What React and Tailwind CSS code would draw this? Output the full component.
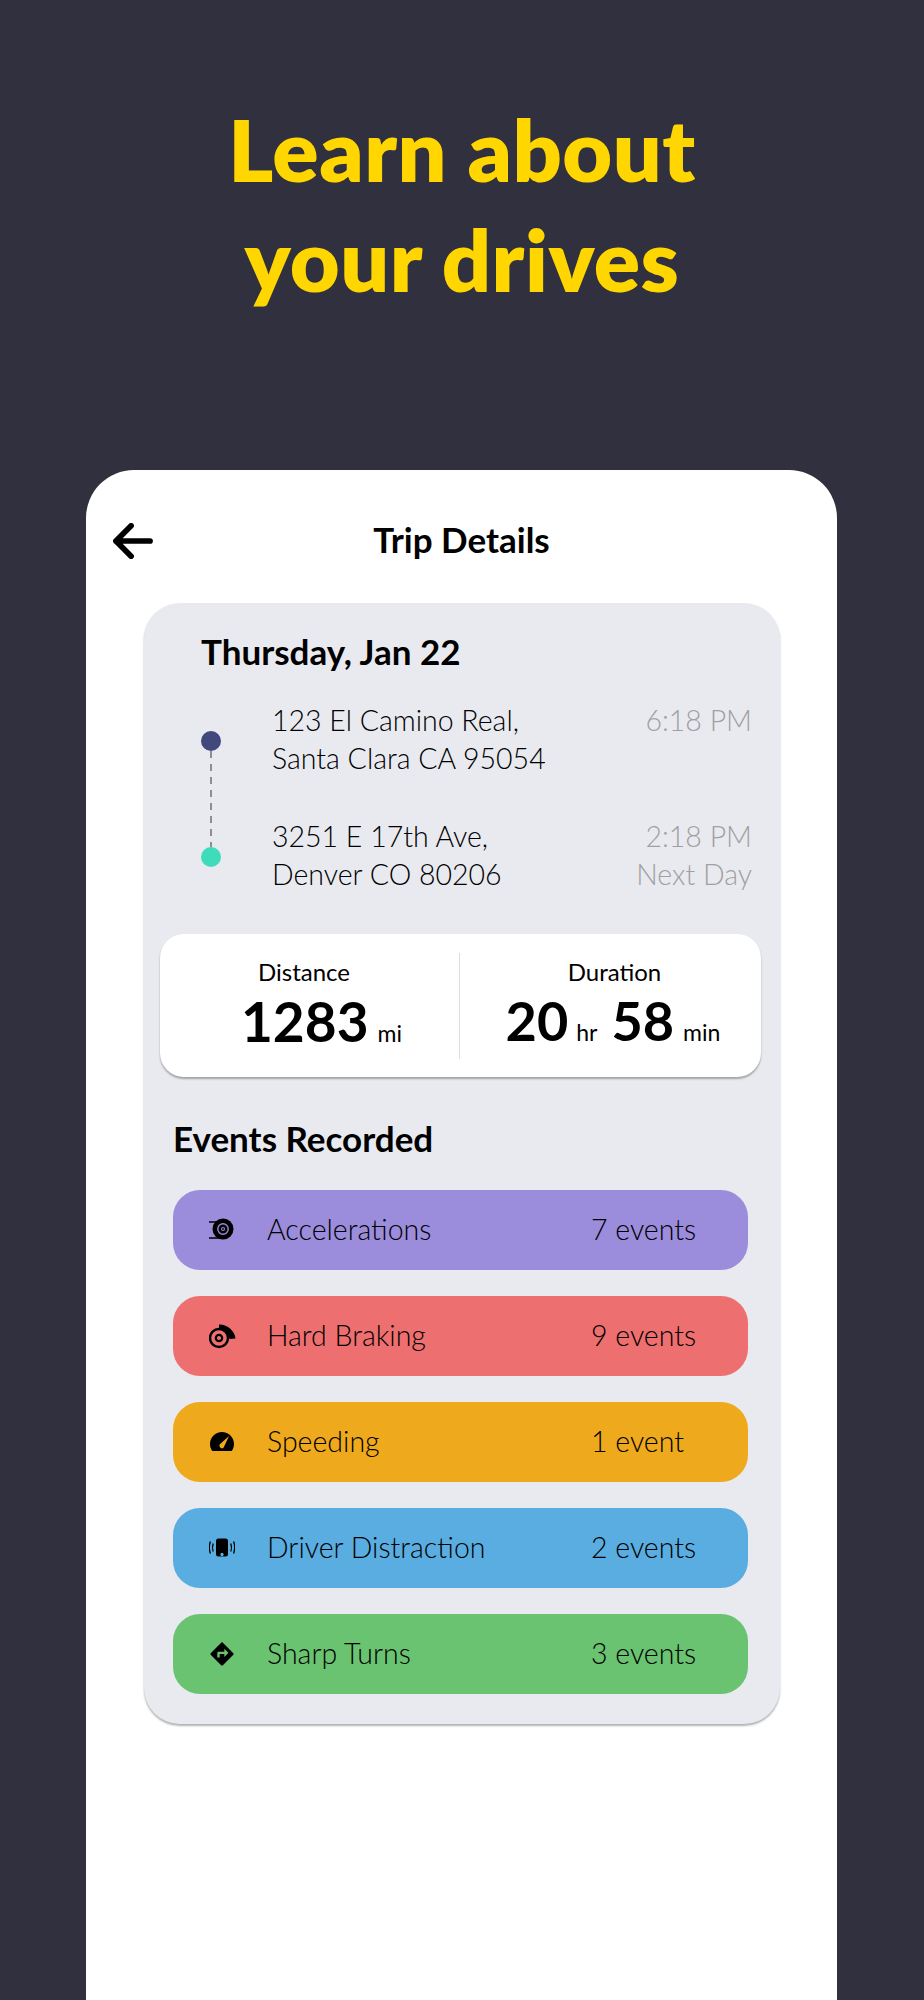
const font = "font-['Lato','Open_Sans',sans-serif]"

function AccelIcon() {
  return (
    <svg viewBox="0 0 26 26" className="w-[26px] h-[26px]">
      <path d="M0 5h9M-1 21h11" stroke="#000" strokeWidth="1.6" fill="none" />
      <circle cx="14" cy="12" r="10.500" fill="#000" />
      <circle cx="14" cy="12" r="5.200" fill="none" stroke="#9b8cdc" strokeWidth="1.400" />
      <circle cx="14" cy="12" r="2" fill="#9b8cdc" />
      <circle cx="14" cy="12" r="0.900" fill="#000" />
    </svg>
  )
}

function BrakeIcon() {
  return (
    <svg viewBox="0 0 27 26" className="w-[27px] h-[26px]">
      <circle cx="10" cy="15" r="9" fill="none" stroke="#000" strokeWidth="2.400" />
      <circle cx="10" cy="15" r="3.200" fill="none" stroke="#000" strokeWidth="2.200" />
      <path d="M10 1.500C18 1 26 8 26.500 15.500L20.500 16C20 11 16 7 10 6Z" fill="#000" />
    </svg>
  )
}

function GaugeIcon() {
  return (
    <svg viewBox="0 0 26 26" className="w-[26px] h-[26px]">
      <path
        fillRule="evenodd"
        d="M13 3C6.400 3 1 8.400 1 15c0 2.400.7 4.600 1.900 6.400.4.400.8.600 1.300.600h17.600c.5 0 .9-.2 1.300-.6C24.300 19.600 25 17.400 25 15 25 8.400 19.600 3 13 3zM10.600 15.600L20 7l-5.200 11.200c-.6 1.100-1.900 1.500-3 .9-1.200-.7-1.600-2.400-1.200-3.500z"
        fill="#000"
      />
    </svg>
  )
}

function PhoneIcon() {
  return (
    <svg viewBox="0 0 26 26" className="w-[26px] h-[26px]">
      <path
        fillRule="evenodd"
        d="M9.500 3.500h7A2.500 2.500 0 0 1 19 6v13a2.500 2.500 0 0 1-2.500 2.500h-7A2.500 2.500 0 0 1 7 19V6a2.500 2.500 0 0 1 2.500-2.500zM13 17.800a1.700 1.700 0 1 0 0 3.400 1.700 1.700 0 0 0 0-3.400z"
        fill="#000"
      />
      <path d="M4.200 8.500c-1 2.600-1 5.400 0 8M21.800 8.500c1 2.600 1 5.400 0 8" stroke="#000" strokeWidth="1.300" fill="none" />
      <path d="M1.400 6.500c-1.400 3.900-1.400 8.100 0 12M24.600 6.500c1.400 3.900 1.400 8.100 0 12" stroke="#000" strokeWidth="1.300" fill="none" />
    </svg>
  )
}

function TurnIcon() {
  return (
    <svg viewBox="0 0 24 24" className="w-[28px] h-[28px]">
      <path
        d="M21.710 11.290l-9-9c-.39-.39-1.020-.39-1.410 0l-9 9c-.39.39-.39 1.020 0 1.410l9 9c.39.39 1.020.39 1.410 0l9-9c.39-.38.39-1.010 0-1.410zM14 14.500V12h-4v3H8v-4c0-.55.45-1 1-1h5V7.500l3.500 3.500-3.500 3.500z"
        fill="#000"
      />
    </svg>
  )
}

const events = [
  { label: 'Accelerations', count: '7 events', color: 'bg-[#9b8cdc]', icon: <AccelIcon /> },
  { label: 'Hard Braking', count: '9 events', color: 'bg-[#ee6f6f]', icon: <BrakeIcon /> },
  { label: 'Speeding', count: '1 event', color: 'bg-[#eeaa1c]', icon: <GaugeIcon /> },
  { label: 'Driver Distraction', count: '2 events', color: 'bg-[#5aade0]', icon: <PhoneIcon /> },
  { label: 'Sharp Turns', count: '3 events', color: 'bg-[#69c370]', icon: <TurnIcon /> },
]

function EventRow({ label, count, color, icon }) {
  return (
    <div className={`${color} h-[80px] rounded-[27px] flex items-center pb-[1px] pl-[35px] text-[28.5px] font-light text-black`}>
      <div className="w-[28px] flex justify-center">{icon}</div>
      <span className="ml-[31px] w-[324px]">{label}</span>
      <span>{count}</span>
    </div>
  )
}

export default function App() {
  return (
    <div className={`${font} bg-[#30303e] h-[2000px] overflow-hidden`}>
      <h1 className="pt-[94px] h-[470px] text-center text-[#ffd600] text-[86px] leading-[110px] tracking-[0.5px] font-extrabold">
        Learn about
        <br />
        your drives
      </h1>

      <div className="ml-[86px] w-[751px] h-[1530px] bg-white rounded-t-[48px] pt-[38px]">
        <div className="relative h-[64px] flex items-center justify-center pb-[2px]">
          <svg viewBox="0 0 42 38" className="absolute left-[27px] top-[15px] w-[40px] h-[36px]">
            <path d="M19 3L3 19l16 16M3 19h36" stroke="#000" strokeWidth="6" strokeLinecap="round" strokeLinejoin="round" fill="none" />
          </svg>
          <span className="text-[35px] font-bold text-black">Trip Details</span>
        </div>

        <div className="ml-[58px] mt-[31px] w-[636px] h-[1121px] bg-[#e9eaef] rounded-[36px] shadow-[0_2px_2px_rgba(0,0,0,0.3)] pt-[25px]">
          <h2 className="ml-[57px] text-[35px] leading-[46px] font-bold text-black">Thursday, Jan 22</h2>

          <div className="relative mt-[27px] ml-[57px] mr-[28px] text-[28.5px] leading-[38px] font-light">
            <div className="absolute left-0 top-[30px] w-[20px] h-[20px] rounded-full bg-[#41487e]" />
            <svg className="absolute left-[9px] top-[50px] w-[2px] h-[96px]">
              <line x1="1" y1="0" x2="1" y2="96" stroke="#333" strokeWidth="1" strokeDasharray="7 6" />
            </svg>
            <div className="absolute left-0 top-[146px] w-[20px] h-[20px] rounded-full bg-[#3fdcbc]" />

            <div className="flex justify-between pl-[71px]">
              <div className="text-black">
                123 El Camino Real,
                <br />
                Santa Clara CA 95054
              </div>
              <div className="text-right text-[#a0a0a2]">6:18 PM</div>
            </div>
            <div className="flex justify-between pl-[71px] mt-[40px]">
              <div className="text-black">
                3251 E 17th Ave,
                <br />
                Denver CO 80206
              </div>
              <div className="text-right text-[#a0a0a2]">
                2:18 PM
                <br />
                Next Day
              </div>
            </div>
          </div>

          <div className="mt-[41px] ml-[16px] w-[601px] h-[143px] bg-white rounded-[24px] shadow-[0_2px_2px_rgba(0,0,0,0.3)] flex items-center text-black">
            <div className="w-[300px] h-[106px] border-r border-[#dddde0] pt-[5px]">
              <div className="text-center text-[24px] leading-[28px] pr-[11px]">Distance</div>
              <div className="flex items-baseline justify-center mt-[5px] pl-[24px] leading-[60px]">
                <span className="text-[55px] font-bold">1283</span>
                <span className="text-[23px] ml-[9px]">mi</span>
              </div>
            </div>
            <div className="flex-1 h-[106px] pt-[5px]">
              <div className="text-center text-[24px] leading-[28px] pl-[8px]">Duration</div>
              <div className="flex items-baseline justify-center mt-[5px] pl-[5px] leading-[60px]">
                <span className="text-[54px] font-bold">20</span>
                <span className="text-[23px] ml-[8px]">hr</span>
                <span className="text-[54px] font-bold ml-[14px]">58</span>
                <span className="text-[23px] ml-[9px]">min</span>
              </div>
            </div>
          </div>

          <h2 className="ml-[29px] mt-[38px] text-[35px] leading-[46px] font-bold text-black">Events Recorded</h2>

          <div className="mt-[29px] ml-[29px] w-[575px] flex flex-col gap-[26px]">
            {events.map(e => (
              <EventRow key={e.label} {...e} />
            ))}
          </div>
        </div>
      </div>
    </div>
  )
}
